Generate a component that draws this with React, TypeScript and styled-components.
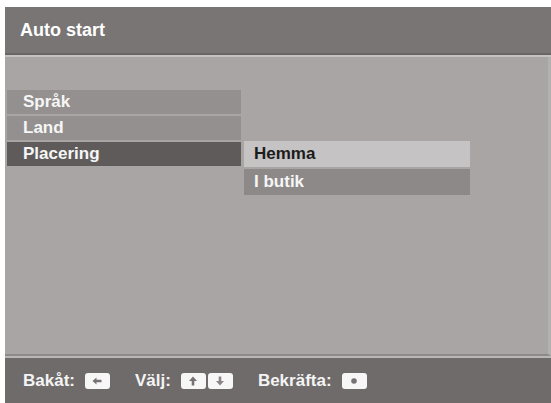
import styled, { createGlobalStyle } from "styled-components";

const GlobalStyle = createGlobalStyle`
  html, body {
    margin: 0;
    padding: 0;
    background: #ffffff;
  }
  body {
    font-family: "Liberation Sans", Arial, sans-serif;
  }
`;

const Page = styled.div`
  width: 551px;
  height: 403px;
  padding: 7px 0 0 5px;
  box-sizing: border-box;
  overflow: hidden;
`;

const Screen = styled.div`
  display: flex;
  flex-direction: column;
  height: 396px;
  background: #a9a5a5;
`;

const Header = styled.div`
  display: flex;
  align-items: center;
  height: 46px;
  padding-left: 15px;
  background: #797575;
  border-bottom: 2px solid #6a6666;
  box-shadow: 0 2px 0 #c4c1c1;
  color: #ffffff;
  font-size: 18px;
  font-weight: bold;
`;

const Body = styled.div`
  flex: 1;
  display: flex;
  align-items: flex-start;
  gap: 3px;
  padding: 33px 0 0 2px;
  margin-top: 2px;
  border-right: 3px solid #b3b0b0;
  border-bottom: 2px solid #8e8a8a;
`;

const List = styled.div<{ $offset?: number }>`
  display: flex;
  flex-direction: column;
  gap: 2px;
  margin-top: ${p => p.$offset ?? 0}px;
`;

const Item = styled.div<{ $width: number; $variant: "plain" | "active" | "focus" | "option" }>`
  display: flex;
  align-items: center;
  width: ${p => p.$width}px;
  height: ${p => (p.$variant === "focus" || p.$variant === "option" ? 26 : 24)}px;
  padding-left: ${p => (p.$variant === "focus" || p.$variant === "option" ? 10 : 16)}px;
  box-sizing: border-box;
  font-size: 17px;
  font-weight: bold;
  background: ${p =>
    p.$variant === "active" ? "#5f5b5b" :
    p.$variant === "focus" ? "#c5c3c3" :
    p.$variant === "option" ? "#8d8989" : "#94908f"};
  color: ${p => (p.$variant === "focus" ? "#1c1c1c" : "#f6f6f6")};
`;

const Footer = styled.div`
  display: flex;
  align-items: center;
  height: 45px;
  padding-left: 18px;
  background: #6f6b6b;
  border-top: 2px solid #b9b6b6;
  color: #f4f4f4;
  font-size: 17px;
  font-weight: bold;
`;

const Hint = styled.div`
  display: flex;
  align-items: center;
  gap: 2px;
  margin-right: 25px;
`;

const Label = styled.span`
  margin-right: 8px;
`;

const Key = styled.span`
  display: inline-flex;
  align-items: center;
  justify-content: center;
  width: 25px;
  height: 16px;
  border-radius: 3px;
  background: #f7f7f7;
`;

function KeyIcon({ dir }: { dir: "left" | "up" | "down" | "ok" }) {
  return (
    <Key>
      <svg width="12" height="10" viewBox="0 0 12 10">
        {dir === "left" && (
          <path d="M1.5 5 L5.5 1.5 L5.5 3.7 L10.5 3.7 L10.5 6.3 L5.5 6.3 L5.5 8.5 Z" fill="#777373" />
        )}
        {dir === "up" && (
          <path d="M6 0.5 L10 5 L7.3 5 L7.3 9.5 L4.7 9.5 L4.7 5 L2 5 Z" fill="#777373" />
        )}
        {dir === "down" && (
          <path d="M6 9.5 L10 5 L7.3 5 L7.3 0.5 L4.7 0.5 L4.7 5 L2 5 Z" fill="#8a8686" />
        )}
        {dir === "ok" && <circle cx="6" cy="5" r="2.8" fill="#777373" />}
      </svg>
    </Key>
  );
}

export default function App() {
  return (
    <>
      <GlobalStyle />
      <Page>
        <Screen>
          <Header>Auto start</Header>
          <Body>
            <List>
              <Item $width={234} $variant="plain">Språk</Item>
              <Item $width={234} $variant="plain">Land</Item>
              <Item $width={234} $variant="active">Placering</Item>
            </List>
            <List $offset={51}>
              <Item $width={226} $variant="focus">Hemma</Item>
              <Item $width={226} $variant="option">I butik</Item>
            </List>
          </Body>
          <Footer>
            <Hint>
              <Label>Bakåt:</Label>
              <KeyIcon dir="left" />
            </Hint>
            <Hint>
              <Label>Välj:</Label>
              <KeyIcon dir="up" />
              <KeyIcon dir="down" />
            </Hint>
            <Hint>
              <Label>Bekräfta:</Label>
              <KeyIcon dir="ok" />
            </Hint>
          </Footer>
        </Screen>
      </Page>
    </>
  );
}
